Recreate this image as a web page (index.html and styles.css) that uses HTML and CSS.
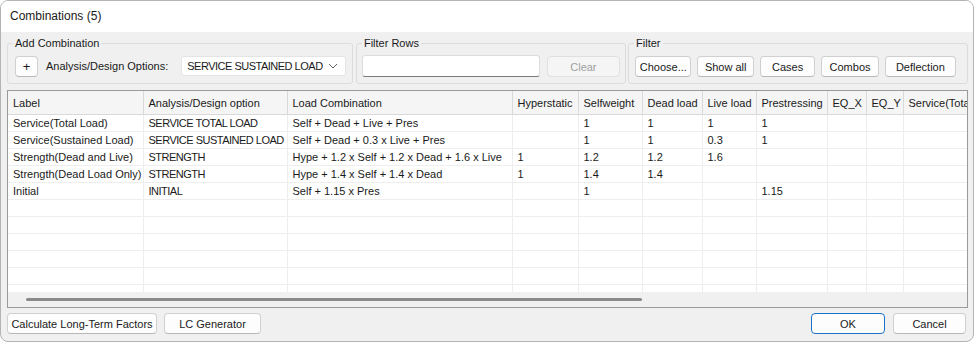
FILE: index.html
```html
<!DOCTYPE html>
<html lang="en">
<head>
  <meta charset="UTF-8" />
  <title>Combinations (5)</title>
  <link rel="stylesheet" href="styles.css">
</head>
<body>
  <div class="window">
    <div class="titlebar">Combinations (5)</div>
    <div class="body">
      <div class="toolbar">
        <fieldset class="group group-add">
          <legend>Add Combination</legend>
          <button class="btn btn-plus">+</button>
          <span class="label">Analysis/Design Options:</span>
          <div class="select">
            <span class="caps">SERVICE SUSTAINED LOAD</span>
            <svg width="10" height="6" viewBox="0 0 10 6"><path d="M1 1 L5 5 L9 1" fill="none" stroke="#606060" stroke-width="1"/></svg>
          </div>
        </fieldset>
        <fieldset class="group group-rows">
          <legend>Filter Rows</legend>
          <input class="text-input" type="text">
          <button class="btn btn-clear" disabled>Clear</button>
        </fieldset>
        <fieldset class="group group-filter">
          <legend>Filter</legend>
          <button class="btn btn-choose">Choose...</button>
          <button class="btn btn-show">Show all</button>
          <button class="btn btn-cases">Cases</button>
          <button class="btn btn-combos">Combos</button>
          <button class="btn btn-defl">Deflection</button>
        </fieldset>
      </div>

      <div class="grid">
        <div class="grid-view">
          <table id="combo-table">
            <colgroup>
              <col style="width:135px"><col style="width:144px"><col style="width:225px"><col style="width:66px">
              <col style="width:64px"><col style="width:60px"><col style="width:54px"><col style="width:71px">
              <col style="width:39px"><col style="width:37px"><col style="width:110px">
            </colgroup>
            <thead>
              <tr>
                <th>Label</th><th>Analysis/Design option</th><th>Load Combination</th><th>Hyperstatic</th>
                <th>Selfweight</th><th>Dead load</th><th>Live load</th><th>Prestressing</th>
                <th>EQ_X</th><th>EQ_Y</th><th>Service(Total Load)</th>
              </tr>
            </thead>
            <tbody id="rows"></tbody>
          </table>
        </div>
        <div class="hscroll"><div class="thumb"></div></div>
      </div>

      <div class="footer">
        <button class="btn btn-calc">Calculate Long-Term Factors</button>
        <button class="btn btn-lc">LC Generator</button>
        <span class="spacer"></span>
        <button class="btn btn-ok">OK</button>
        <button class="btn btn-cancel">Cancel</button>
      </div>
    </div>
  </div>

  <script>
    const combos = [
      ["Service(Total Load)", "SERVICE TOTAL LOAD", "Self + Dead + Live + Pres", "", "1", "1", "1", "1"],
      ["Service(Sustained Load)", "SERVICE SUSTAINED LOAD", "Self + Dead + 0.3 x Live + Pres", "", "1", "1", "0.3", "1"],
      ["Strength(Dead and Live)", "STRENGTH", "Hype + 1.2 x Self + 1.2 x Dead + 1.6 x Live", "1", "1.2", "1.2", "1.6", ""],
      ["Strength(Dead Load Only)", "STRENGTH", "Hype + 1.4 x Self + 1.4 x Dead", "1", "1.4", "1.4", "", ""],
      ["Initial", "INITIAL", "Self + 1.15 x Pres", "", "1", "", "", "1.15"]
    ];

    const tbody = document.getElementById("rows");
    const totalRows = 11;
    for (let i = 0; i < totalRows; i++) {
      const row = combos[i] || [];
      const tr = document.createElement("tr");
      for (let c = 0; c < 11; c++) {
        const td = document.createElement("td");
        td.textContent = row[c] || "";
        if (c === 1) td.className = "caps";
        tr.appendChild(td);
      }
      tbody.appendChild(tr);
    }
  </script>
</body>
</html>
```

FILE: styles.css
```css
html, body { margin: 0; padding: 0; background: #ffffff; }
body { font-family: "Liberation Sans", Arial, sans-serif; font-size: 11px; color: #1a1a1a; }

.window { width: 972px; height: 340px; border: 1px solid #b4b4b4; border-radius: 8px; overflow: hidden; background: #f0f0f0; display: flex; flex-direction: column; }
.titlebar { height: 31px; line-height: 31px; padding-left: 9px; background: #ffffff; font-size: 12px; }
.body { flex: 1; display: flex; flex-direction: column; padding: 0 5px 0 6px; }
.caps { letter-spacing: -0.5px; }

/* group boxes */
.toolbar { display: flex; height: 56px; }
.group { margin: 4px 0 0 0; padding: 0 5px 6px 5px; min-width: 0; border: 1px solid #dcdcdc; border-radius: 3px; display: flex; align-items: flex-end; height: 48px; box-sizing: border-box; white-space: nowrap; }
.group legend { padding: 0 2px; line-height: 14px; }
.group-add { width: 347px; }
.group-rows { width: 271px; margin-left: 3px; }
.group-filter { width: 341px; margin-left: 2px; }

.btn { font-family: inherit; font-size: 11px; color: #1a1a1a; background: #fdfdfd; border: 1px solid #d0d0d0; border-bottom-color: #b8b8b8; border-radius: 4px; height: 21px; padding: 0; box-sizing: border-box; white-space: nowrap; }
.btn:disabled { color: #a0a0a0; background: #f5f5f5; border-color: #e0e0e0; }
.btn-plus { width: 23px; margin-left: 2px; font-size: 13px; line-height: 18px; }
.label { margin-left: 8px; line-height: 21px; }
.select { margin-left: 13px; width: 165px; height: 20px; background: #ffffff; border: 1px solid #e4e4e4; border-radius: 3px; box-sizing: border-box; display: flex; align-items: center; justify-content: space-between; padding: 0 7px 0 5px; margin-bottom: 1px; }

.text-input { width: 178px; height: 22px; box-sizing: border-box; border: 1px solid #dcdcdc; border-bottom: 1px solid #7a7a7a; border-radius: 3px; background: #ffffff; margin: 0; }
.btn-clear { width: 73px; margin-left: 7px; }

.group-filter .btn { margin-right: 6px; }
.btn-choose { width: 57px; margin-left: 1px; }
.btn-show { width: 57px; }
.btn-cases { width: 56px; }
.btn-combos { width: 58px; }
.btn-defl { width: 72px; }

/* data grid */
.grid { margin-top: 2px; width: 961px; height: 218px; border: 1px solid #9a9a9a; box-sizing: border-box; background: #ffffff; display: flex; flex-direction: column; }
.grid-view { flex: 1; overflow: hidden; }
table { border-collapse: collapse; table-layout: fixed; width: 1005px; }
th, td { white-space: nowrap; overflow: hidden; text-align: left; padding: 0 0 0 5px; font-weight: normal; }
th { height: 23px; background: #f5f5f5; border-right: 1px solid #d9d9d9; border-bottom: 1px solid #d9d9d9; }
td { height: 16px; border-right: 1px solid #eeeeee; border-bottom: 1px solid #eeeeee; line-height: 16px; }
.hscroll { height: 15px; background: #f0f0f0; display: flex; align-items: center; }
.thumb { margin-left: 18px; width: 616px; height: 3px; border-radius: 2px; background: #8a8a8a; }

/* footer */
.footer { display: flex; align-items: flex-start; padding-top: 5px; height: 37px; box-sizing: border-box; }
.btn-calc { width: 150px; }
.btn-lc { width: 97px; margin-left: 7px; }
.spacer { flex: 1; }
.btn-ok { width: 74px; border: 1px solid #1a73c8; }
.btn-cancel { width: 73px; margin-left: 8px; margin-right: 2px; }
```
